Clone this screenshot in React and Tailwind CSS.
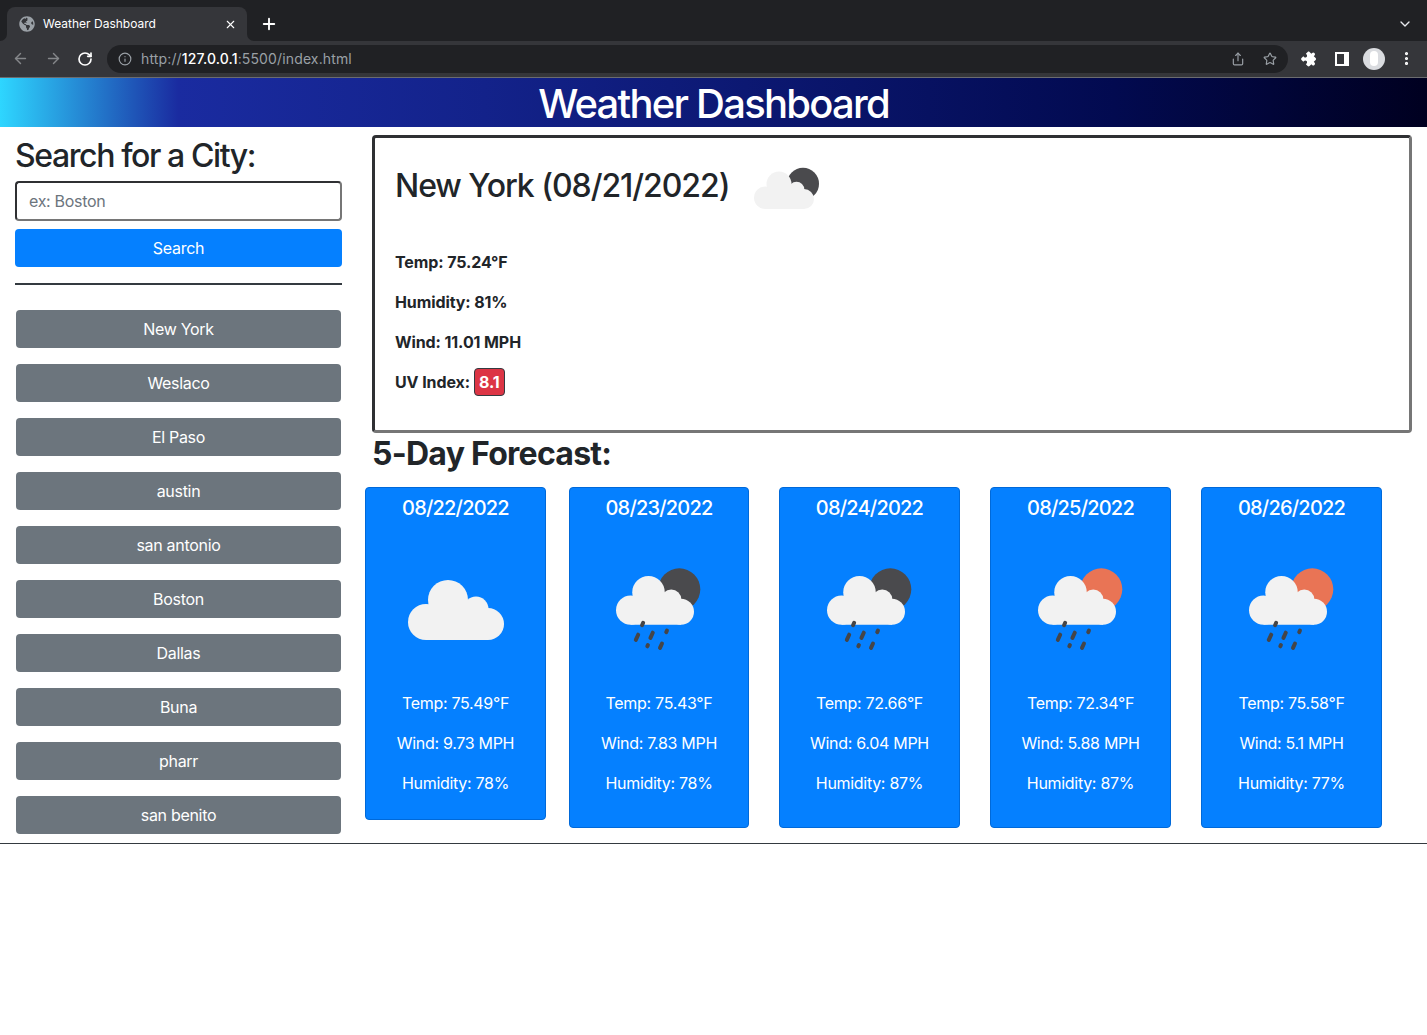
import { ArrowLeft, ArrowRight, RotateCw, Info, Share, Star, MoreVertical, ChevronDown, X, Plus } from "lucide-react"
import { FaGlobeAmericas } from "react-icons/fa"
import { MdExtension } from "react-icons/md"

const cities = ["New York", "Weslaco", "El Paso", "austin", "san antonio", "Boston", "Dallas", "Buna", "pharr", "san benito"]

const forecast = [
  { date: "08/22/2022", temp: "75.49", wind: "9.73", humidity: "78", icon: "cloud", width: "w-[181px]", height: "h-[333px]", extra: "mr-[-7px]" },
  { date: "08/23/2022", temp: "75.43", wind: "7.83", humidity: "78", icon: "#4a4a4d", width: "w-[180px]", height: "h-[341px]", extra: "" },
  { date: "08/24/2022", temp: "72.66", wind: "6.04", humidity: "87", icon: "#4a4a4d", width: "w-[181px]", height: "h-[341px]", extra: "" },
  { date: "08/25/2022", temp: "72.34", wind: "5.88", humidity: "87", icon: "#e97455", width: "w-[181px]", height: "h-[341px]", extra: "" },
  { date: "08/26/2022", temp: "75.58", wind: "5.1", humidity: "77", icon: "#e97455", width: "w-[181px]", height: "h-[341px]", extra: "" },
]

// cloud outline in a 96x60 box, the other icons scale it
function CloudShape({ transform }) {
  return (
    <g fill="#f2f2f2" transform={transform}>
      <circle cx="18" cy="42" r="18" />
      <circle cx="80" cy="44" r="16" />
      <circle cx="40" cy="20" r="20" />
      <circle cx="68" cy="29" r="12.5" />
      <rect x="18" y="28" width="62" height="32" />
    </g>
  )
}

function CloudIcon() {
  return (
    <svg width="96" height="60" viewBox="0 0 96 60">
      <CloudShape />
    </svg>
  )
}

function RainIcon({ color }) {
  // x, y, half length of each drop
  const drops = [[26.6, 48, 1.2], [21, 61.3, 2.6], [35.6, 59.3, 2.6], [50.6, 55.3, 0.8], [31.6, 69.7, 0.6], [45, 69.7, 2.2]]
  return (
    <svg width="86" height="84" viewBox="0 -8 86 84">
      <circle cx="63.3" cy="13.3" r="21" fill={color} />
      <CloudShape transform="scale(0.8125)" />
      {drops.map(([x, y, len], i) => (
        <line key={i} x1={x + len * 0.45} y1={y - len} x2={x - len * 0.45} y2={y + len} stroke="#454548" strokeWidth="4" strokeLinecap="round" />
      ))}
    </svg>
  )
}

function BrowserBar() {
  return (
    <div className="bg-[#202124] font-['Inter',sans-serif]">
      <div className="flex h-[41px] items-end pl-[7px] pr-[14px]">
        <div className="relative flex h-[34px] w-[240px] items-center rounded-t-[8px] bg-[#35363a] pl-[12px] pr-[10px] text-white">
          <FaGlobeAmericas className="h-[16px] w-[16px] text-[#9aa0a6]" />
          <span className="ml-[8px] flex-1 text-[12px]">Weather Dashboard</span>
          <X className="h-[13px] w-[13px]" strokeWidth={2} />
          <svg className="absolute bottom-0 left-[-7px]" width="7" height="7" viewBox="0 0 7 7"><path d="M7 0 V7 H0 A7 7 0 0 0 7 0Z" fill="#35363a" /></svg>
          <svg className="absolute bottom-0 right-[-7px]" width="7" height="7" viewBox="0 0 7 7"><path d="M0 0 V7 H7 A7 7 0 0 1 0 0Z" fill="#35363a" /></svg>
        </div>
        <Plus className="mb-[8px] ml-[13px] h-[18px] w-[18px] text-white" strokeWidth={2.5} />
        <ChevronDown className="mb-[9px] ml-auto h-[16px] w-[16px] text-[#e8eaed]" strokeWidth={2} />
      </div>
      <div className="flex h-[37px] items-center border-b border-[#6b6c6f] bg-[#35363a] pb-[1px]">
        <ArrowLeft className="ml-[12px] h-[17px] w-[17px] text-[#85878a]" strokeWidth={2} />
        <ArrowRight className="ml-[16px] h-[17px] w-[17px] text-[#85878a]" strokeWidth={2} />
        <RotateCw className="ml-[15px] h-[16px] w-[16px] text-white" strokeWidth={2.5} />
        <div className="ml-[14px] flex h-[28px] w-[1181px] items-center rounded-full bg-[#202124] pl-[11px] pr-[11px]">
          <Info className="h-[14px] w-[14px] text-[#9aa0a6]" strokeWidth={2} />
          <span className="ml-[9px] flex-1 text-[14px] tracking-[0.14px] text-[#9aa0a6]">http://<span className="font-medium text-white">127.0.0.1</span>:5500/index.html</span>
          <Share className="mr-[18px] h-[14px] w-[14px] text-[#9aa0a6]" strokeWidth={2} />
          <Star className="h-[14px] w-[14px] text-[#9aa0a6]" strokeWidth={2} />
        </div>
        <MdExtension className="ml-[14px] h-[16px] w-[16px] rotate-45 text-white" />
        <div className="ml-[17px] flex h-[14px] w-[14px] bg-white">
          <div className="ml-[2px] mt-[2px] h-[10px] w-[7px] bg-[#35363a]" />
        </div>
        <div className="ml-[14px] flex h-[22px] w-[22px] items-center justify-center rounded-full bg-[#dadce0]">
          <div className="h-[15px] w-[8px] rounded-full bg-white" />
        </div>
        <MoreVertical className="ml-[13px] h-[17px] w-[17px] text-white" strokeWidth={2.5} />
      </div>
    </div>
  )
}

function Sidebar() {
  return (
    <aside className="w-[372px] shrink-0 pl-[15px] pr-[30px] pt-[10px]">
      <h2 className="text-[32px] font-medium leading-[38px] tracking-[-1.4px] text-[#212529]">Search for a City:</h2>
      <input
        className="mt-[6px] block h-[40px] w-full rounded-[4px] border-2 border-b-[#767676] border-l-[#2f3033] border-r-[#767676] border-t-[#2f3033] px-[12px] text-[16px] tracking-[-0.3px] text-[#495057] placeholder:text-[#6c757d]"
        placeholder="ex: Boston"
      />
      <button className="mt-[8px] block h-[38px] w-full rounded-[4px] bg-[#0580ff] text-[16px] tracking-[-0.3px] text-white">Search</button>
      <hr className="mt-[16px] border-t-2 border-[#343a40]" />
      <div className="mt-[25px] flex flex-col gap-[16px] px-px">
        {cities.map((city) => (
          <button key={city} className="h-[38px] w-full rounded-[4px] bg-[#6c757d] text-[16px] tracking-[-0.3px] text-white">{city}</button>
        ))}
      </div>
    </aside>
  )
}

function CurrentWeather() {
  return (
    <section className="h-[298px] w-[1040px] rounded-[4px] border-[3px] border-b-[#767676] border-l-[#2f3033] border-r-[#767676] border-t-[#2f3033] pl-[20px] pt-[29px]">
      <div className="flex h-[38px] items-center">
        <h2 className="text-[32px] font-medium leading-[38px] tracking-[-1.05px] text-[#212529]">New York (08/21/2022)</h2>
        <svg className="ml-[25px]" width="66" height="46" viewBox="0 0 66 46">
          <circle cx="49" cy="20.8" r="16" fill="#4a4a4d" />
          <CloudShape transform="translate(0 8.5) scale(0.625)" />
        </svg>
      </div>
      <div className="mt-[45px] text-[16px] font-bold leading-[24px] tracking-[-0.1px] text-[#212529]">
        <p className="mb-[16px]">Temp: 75.24°F</p>
        <p className="mb-[16px]">Humidity: 81%</p>
        <p className="mb-[16px]">Wind: 11.01 MPH</p>
        <p className="flex h-[24px] items-center gap-[4px]">
          UV Index:
          <span className="rounded-[4px] border border-[#343a40] bg-[#dc3545] px-[4px] font-bold leading-[26px] text-white">8.1</span>
        </p>
      </div>
    </section>
  )
}

function ForecastCard({ day }) {
  return (
    <div className={`${day.width} ${day.height} ${day.extra} shrink-0 rounded-[4px] border border-[#0069d9] bg-[#0580ff] text-center text-white`}>
      <h5 className="mt-[8px] text-[20px] font-medium leading-[24px] tracking-[-0.8px]">{day.date}</h5>
      <div className="flex h-[171px] justify-center">
        {day.icon === "cloud" ? (
          <div className="pt-[60px]"><CloudIcon /></div>
        ) : (
          <div className="pt-[48px]"><RainIcon color={day.icon} /></div>
        )}
      </div>
      <div className="text-[16px] leading-[24px] tracking-[-0.3px]">
        <p className="mb-[16px]">Temp: {day.temp}°F</p>
        <p className="mb-[16px]">Wind: {day.wind} MPH</p>
        <p>Humidity: {day.humidity}%</p>
      </div>
    </div>
  )
}

export default function App() {
  return (
    <div className="min-h-[1035px] bg-white font-['Inter',sans-serif]">
      <BrowserBar />
      <header className="h-[49px] bg-[linear-gradient(90deg,#2ed6ff_0%,#1a2ba0_12.5%,#13228a_34%,#020a50_78%,#000020_100%)] text-center text-[40px] font-medium leading-[52px] tracking-[-1.76px] text-white">
        Weather Dashboard
      </header>
      <div className="flex h-[717px] border-b border-[#343a40]">
        <Sidebar />
        <main className="pt-[8px]">
          <CurrentWeather />
          <h2 className="mt-[2px] text-[32px] font-bold leading-[38px] tracking-[-0.73px] text-[#212529]">5-Day Forecast:</h2>
          <div className="ml-[-7px] mt-[14px] flex gap-[30px]">
            {forecast.map((day) => (
              <ForecastCard key={day.date} day={day} />
            ))}
          </div>
        </main>
      </div>
    </div>
  )
}
